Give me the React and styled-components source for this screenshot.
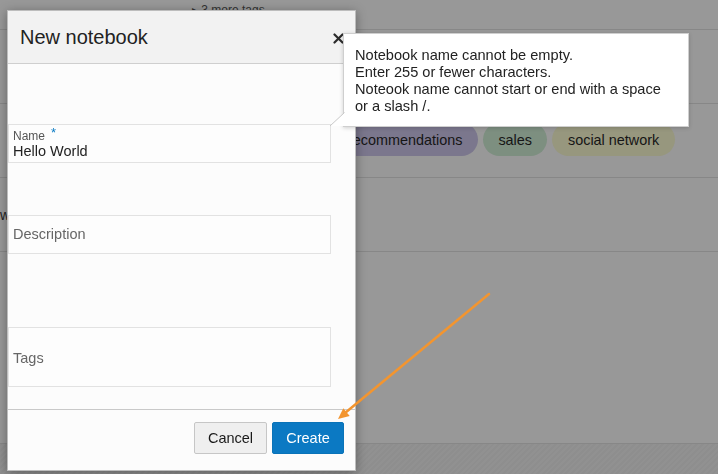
import React from 'react';
import styled, { createGlobalStyle } from 'styled-components';

const GlobalStyle = createGlobalStyle`
  html, body {
    margin: 0;
    padding: 0;
    overflow: hidden;
    background: #989898;
    font-family: "Liberation Sans", Arial, sans-serif;
  }
`;

const Page = styled.div`
  width: 718px;
  height: 474px;
  display: flex;
  flex-direction: column;
`;

const BgRow = styled.div`
  height: ${(p) => p.$h}px;
  flex-shrink: 0;
  border-bottom: 1px solid #878787;
  display: flex;
  align-items: ${(p) => (p.$top ? 'flex-start' : 'center')};
  padding-left: ${(p) => p.$pl || 0}px;
  gap: 5px;
`;

const BgFooter = styled.div`
  flex: 1;
  background: repeating-linear-gradient(
    135deg,
    #8e8e8e 0px,
    #8e8e8e 2px,
    #919191 2px,
    #919191 4px
  );
`;

const MoreTags = styled.span`
  margin-top: 3px;
  font-size: 12px;
  line-height: 14px;
  color: #333;
`;

const HiddenText = styled.span`
  font-size: 14px;
  color: #222;
`;

const Pill = styled.span`
  height: 33px;
  margin-top: -2px;
  padding: 0 ${(p) => p.$px || 16}px;
  border-radius: 17px;
  background: ${(p) => p.$bg};
  display: flex;
  align-items: center;
  font-size: 14.4px;
  color: #151515;
`;

const Dialog = styled.div`
  position: fixed;
  left: 7px;
  top: 10px;
  width: 349px;
  height: 461px;
  box-sizing: border-box;
  border: 1px solid #bdbdbd;
  background: #fcfcfc;
  box-shadow: 0 2px 10px rgba(0, 0, 0, 0.35);
  display: flex;
  flex-direction: column;
`;

const Header = styled.div`
  height: 53px;
  box-sizing: border-box;
  flex-shrink: 0;
  background: #f2f2f2;
  border-bottom: 1px solid #cfcfcf;
  display: flex;
  align-items: center;
  padding: 0 11px 0 12px;
`;

const Title = styled.h1`
  margin: 0;
  font-size: 20px;
  font-weight: normal;
  color: #222;
`;

const Close = styled.button`
  margin-left: auto;
  margin-top: 3px;
  border: none;
  background: none;
  padding: 0;
  width: 11px;
  height: 11px;
  display: flex;
`;

const Body = styled.div`
  flex: 1;
  padding: 60px 24px 0 0;
  display: flex;
  flex-direction: column;
`;

const Field = styled.div`
  height: ${(p) => p.$h}px;
  margin-top: ${(p) => p.$mt || 0}px;
  box-sizing: border-box;
  border: 1px solid #e2e2e2;
  background: #fdfdfd;
  padding: ${(p) => (p.$filled ? '4px 0 0 4px' : '0 0 0 4px')};
  display: flex;
  flex-direction: column;
  justify-content: ${(p) => (p.$filled ? 'flex-start' : 'center')};
`;

const Label = styled.div`
  font-size: 12px;
  line-height: 14px;
  color: #555;
`;

const Required = styled.span`
  color: #0a7bc4;
  font-size: 13px;
  margin-left: 6px;
  position: relative;
  top: -3px;
`;

const Value = styled.div`
  font-size: 14.5px;
  line-height: 17px;
  color: #222;
`;

const Placeholder = styled.div`
  font-size: 14.5px;
  line-height: 17px;
  color: #666;
  padding-top: ${(p) => p.$pt || 0}px;
`;

const Footer = styled.div`
  height: 61px;
  box-sizing: border-box;
  flex-shrink: 0;
  border-top: 1px solid #c9c9c9;
  display: flex;
  justify-content: flex-end;
  align-items: flex-start;
  padding: 12px 11px 0 0;
  gap: 5px;
`;

const Button = styled.button`
  height: 32px;
  width: ${(p) => p.$w}px;
  box-sizing: border-box;
  padding: 0;
  border-radius: 2px;
  font-family: inherit;
  font-size: 14.5px;
  border: 1px solid ${(p) => (p.$primary ? '#0a73b8' : '#c6c6c6')};
  background: ${(p) => (p.$primary ? '#0b79c3' : '#efefef')};
  color: ${(p) => (p.$primary ? '#fff' : '#1a1a1a')};
`;

const Tooltip = styled.div`
  position: fixed;
  left: 343px;
  top: 33px;
  width: 346px;
  height: 94px;
  box-sizing: border-box;
  background: #fff;
  border: 1px solid #cfcfcf;
  box-shadow: 0 1px 4px rgba(0, 0, 0, 0.18);
  padding: 13px 11px;
  font-size: 14.6px;
  line-height: 17px;
  color: #222;
`;

const Pointer = styled.svg`
  position: absolute;
  left: -15px;
  bottom: -1px;
`;

const Annotation = styled.svg`
  position: fixed;
  left: 0;
  top: 0;
  pointer-events: none;
`;

export default function App() {
  return (
    <>
      <GlobalStyle />
      <Page>
        <BgRow $h={29} $top $pl={192}>
          <MoreTags>▸ 3 more tags</MoreTags>
        </BgRow>
        <BgRow $h={73} />
        <BgRow $h={73} $pl={332}>
          <Pill $bg="#7b778d">recommendations</Pill>
          <Pill $bg="#7d8f80" $px={15}>sales</Pill>
          <Pill $bg="#97977e">social network</Pill>
        </BgRow>
        <BgRow $h={73}>
          <HiddenText>w</HiddenText>
        </BgRow>
        <BgRow $h={191} />
        <BgFooter />
      </Page>

      <Dialog>
        <Header>
          <Title>New notebook</Title>
          <Close aria-label="Close">
            <svg width="11" height="11" viewBox="0 0 11 11">
              <path d="M1.5 1.5 L9.5 9.5 M9.5 1.5 L1.5 9.5" stroke="#2b2b2b" strokeWidth="2.2" strokeLinecap="round" />
            </svg>
          </Close>
        </Header>
        <Body>
          <Field $h={39} $filled>
            <Label>
              Name<Required>*</Required>
            </Label>
            <Value>Hello World</Value>
          </Field>
          <Field $h={39} $mt={52}>
            <Placeholder>Description</Placeholder>
          </Field>
          <Field $h={60} $mt={73}>
            <Placeholder $pt={2}>Tags</Placeholder>
          </Field>
        </Body>
        <Footer>
          <Button $w={73}>Cancel</Button>
          <Button $primary $w={72}>Create</Button>
        </Footer>
      </Dialog>

      <Tooltip>
        Notebook name cannot be empty.
        <br />
        Enter 255 or fewer characters.
        <br />
        Noteook name cannot start or end with a space
        <br />
        or a slash /.
        <Pointer width="16" height="16" viewBox="0 0 16 16">
          <polygon points="15,2 1,15 16,15 16,2" fill="#fff" />
          <line x1="15.5" y1="1.5" x2="1" y2="15" stroke="#c8c8c8" strokeWidth="1" />
        </Pointer>
      </Tooltip>

      <Annotation width="718" height="474" viewBox="0 0 718 474">
        <line x1="489" y1="294" x2="345" y2="413" stroke="#f3952f" strokeWidth="2.5" strokeLinecap="round" />
        <polygon points="338,419 349.7,415.9 343.3,408.2" fill="#f3952f" />
      </Annotation>
    </>
  );
}
